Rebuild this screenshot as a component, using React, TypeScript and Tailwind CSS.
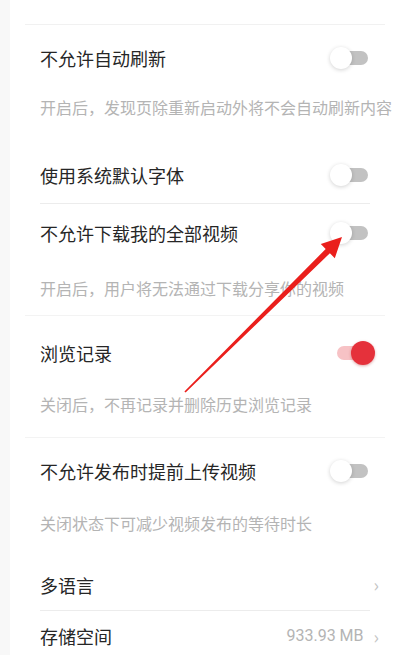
const font = { fontFamily: '"Noto Sans CJK SC", "Noto Sans", sans-serif' };

type ToggleProps = { on?: boolean };

const Toggle = ({ on = false }: ToggleProps) => {
  if (on) {
    return (
      <div className="relative w-[38px] h-[24px] mr-[-5px] shrink-0">
        <div className="absolute left-0 top-[5px] h-[14px] w-[30px] rounded-full bg-[#f7c2c5]" />
        <div className="absolute right-0 top-0 h-[24px] w-[24px] rounded-full bg-[#e5313b] shadow-[0_1px_3px_rgba(160,0,0,0.35)]" />
      </div>
    );
  }
  return (
    <div className="relative w-[38px] h-[22px] mr-[2px] shrink-0">
      <div className="absolute right-0 top-[4px] h-[14px] w-[30px] rounded-full bg-[#c2c2c2]" />
      <div className="absolute left-0 top-0 h-[22px] w-[22px] rounded-full bg-white shadow-[0_1px_4px_rgba(0,0,0,0.18)]" />
    </div>
  );
};

const Title = ({ label, h, on, line }: { label: string; h: string; on?: boolean; line?: boolean }) => (
  <div className={`flex items-center justify-between ${h} ${line ? "border-b border-[#ececec]" : ""}`}>
    <span className="text-[18px] leading-[24px] text-[#262626]">{label}</span>
    <Toggle on={on} />
  </div>
);

const Desc = ({ text, h, pt }: { text: string; h: string; pt: string }) => (
  <div className={`${h} ${pt} text-[16px] leading-[20px] text-[#b4b4b4] whitespace-nowrap`}>{text}</div>
);

const Arrow = () => (
  <svg className="absolute left-0 top-0 pointer-events-none" width="400" height="655" viewBox="0 0 400 655">
    <polygon
      fill="#ea1f1c"
      points="185.6,392.6 329.9,253.2 334.8,258.2 342,237 320.8,244 325.7,249 184.4,391.4"
    />
  </svg>
);

export default function App() {
  return (
    <div className="relative w-[400px] h-[655px] overflow-hidden bg-white flex" style={font}>
      <div className="w-[10px] shrink-0 bg-[#f8f8f8]" />
      <div className="w-[390px] shrink-0 pt-[24px] pl-[15px] pr-[15px]">
        <div className="border-t border-[#f1f1f1] px-[15px]">
          <Title label="不允许自动刷新" h="h-[65px]" />
          <Desc text="开启后，发现页除重新启动外将不会自动刷新内容" h="h-[57px]" pt="pt-[7px]" />
          <Title label="使用系统默认字体" h="h-[57px]" line />
          <Title label="不允许下载我的全部视频" h="h-[58px]" />
          <div className="-mx-[15px] px-[15px] border-b border-[#f3f3f3]">
            <Desc text="开启后，用户将无法通过下载分享你的视频" h="h-[53px]" pt="pt-[16px]" />
          </div>
          <Title label="浏览记录" h="h-[74px]" on />
          <div className="-mx-[15px] px-[15px] border-b border-[#f3f3f3]">
            <Desc text="关闭后，不再记录并删除历史浏览记录" h="h-[47px]" pt="pt-[4px]" />
          </div>
          <Title label="不允许发布时提前上传视频" h="h-[66px]" />
          <Desc text="关闭状态下可减少视频发布的等待时长" h="h-[55px]" pt="pt-[9px]" />
          <div className="flex items-center justify-between h-[52px] border-b border-[#ececec]">
            <span className="text-[18px] leading-[24px] text-[#262626]">多语言</span>
            <span className="text-[18px] text-[#c4c4c4] mr-[-9px]">›</span>
          </div>
          <div className="flex items-center justify-between h-[50px]">
            <span className="text-[18px] leading-[24px] text-[#262626]">存储空间</span>
            <div className="flex items-center gap-[10px] mr-[-9px]">
              <span className="text-[16px] text-[#b4b4b4]" style={{ fontFamily: '"Roboto", "Noto Sans", sans-serif' }}>933.93 MB</span>
              <span className="text-[18px] text-[#c4c4c4]">›</span>
            </div>
          </div>
        </div>
      </div>
      <Arrow />
    </div>
  );
}
